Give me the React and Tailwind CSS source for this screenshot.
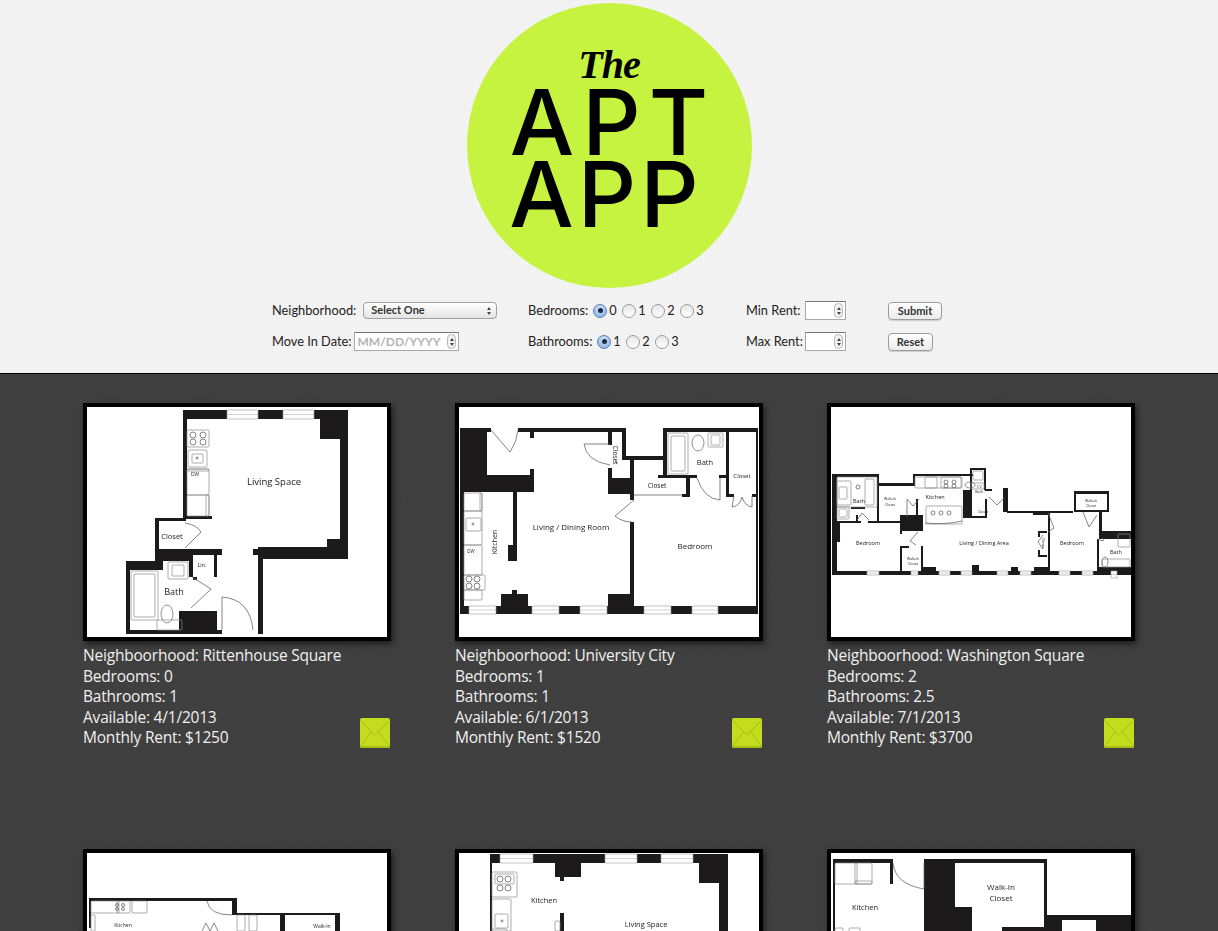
import React from 'react';

// floor plans, in image coordinates (300x230)
const PLANS = [
    {
        walls: [
            [96, 3, 165, 9], [233, 3, 28, 29], [253, 3, 8, 149], [240, 132, 21, 20], [171, 140, 90, 12],
            [166, 142, 6, 6], [171, 140, 5, 87], [96, 3, 4, 109], [99, 109, 26, 3], [68, 111, 31, 3],
            [68, 111, 4, 45], [69, 142, 66, 6], [69, 148, 33, 6], [39, 154, 37, 9], [39, 154, 4, 73], [39, 223, 96, 4],
            [92, 204, 38, 20], [102, 146, 4, 24], [127, 148, 3, 22], [106, 170, 4, 3],
        ],
        windows: [[140, 3, 31, 9], [196, 3, 31, 9]],
        lines: [
            'M98 116 Q110 118 114 125 L98 141', 'M104 201 L124 182 L105 170', 'M135 223 L135 190 Q163 192 166 223',
        ],
        boxes: [
            [100, 23, 22, 17], [101, 43, 19, 17], [105, 47, 11, 9], [100, 62, 22, 26], [100, 62, 22, 2], [100, 88, 22, 21],
            [119, 88, 3, 21], [44, 164, 27, 49], [47, 167, 21, 43], [81, 155, 20, 17], [85, 158, 12, 11], [70, 213, 25, 10],
        ],
        circles: [[106, 28, 3], [116, 28, 3], [106, 35, 3], [116, 35, 3], [110, 51, 1]],
        ovals: [[80, 207, 6, 9]],
        labels: [
            ['Living Space', 187, 75, 9.5], ['Closet', 85, 130, 7.5], ['Bath', 87, 186, 9], ['Lin.', 115, 159, 5.5], ['DW', 108, 68, 5],
        ],
    },
    {
        walls: [
            [1, 21, 31, 4], [59, 21, 107, 4], [1, 21, 27, 64], [1, 68, 74, 17], [71, 62, 4, 23], [71, 25, 4, 6],
            [54, 85, 4, 53], [49, 138, 9, 16], [1, 85, 4, 121], [1, 199, 298, 8], [42, 187, 27, 12], [53, 183, 5, 4],
            [149, 187, 26, 12], [171, 115, 4, 84], [149, 25, 4, 13], [149, 61, 4, 10], [149, 71, 26, 16],
            [163, 21, 4, 32], [163, 49, 45, 4], [171, 53, 4, 40], [204, 21, 4, 47], [204, 21, 95, 4], [297, 21, 2, 179],
            [267, 25, 3, 65], [199, 68, 39, 3], [227, 71, 4, 19], [223, 87, 8, 3], [260, 68, 10, 3], [267, 87, 8, 3], [293, 87, 6, 3],
        ],
        windows: [[10, 199, 27, 8], [73, 199, 27, 8], [121, 199, 27, 8], [185, 199, 27, 8], [233, 199, 26, 8]],
        lines: [
            'M32 23 L51 45 Q58 35 59 23', 'M125 37 L151 37 M125 37 Q127 54 151 58', 'M238 71 Q245 92 261 93 L261 71',
            'M175 93 L156 109 Q163 115 173 115', 'M275 89 L273 100 Q281 99 283 90 Q286 99 293 100 L293 89', 'M175 88 L223 88',
        ],
        boxes: [
            [5, 86, 18, 18], [21, 86, 2, 18], [5, 104, 18, 34], [7, 111, 15, 13], [5, 138, 18, 30], [5, 168, 21, 15], [5, 183, 18, 10],
            [209, 26, 20, 41], [212, 29, 14, 35], [249, 26, 15, 14], [252, 28, 9, 10],
        ],
        circles: [[10, 172, 3], [18, 172, 3], [10, 179, 3], [18, 179, 3], [14, 117, 1]],
        ovals: [[239, 36, 6, 8]],
        labels: [
            ['Living / Dining Room', 112, 121, 8], ['Bedroom', 236, 140, 8], ['Bath', 246, 56, 7.5], ['Closet', 198, 79, 6.5],
            ['Closet', 283, 69, 6], ['Closet', 156, 48, 6.5, 90], ['Kitchen', 36, 135, 7, -90], ['DW', 12, 145, 4.5],
        ],
    },
    {
        walls: [
            [1, 164, 299, 4], [1, 67, 5, 101], [1, 67, 47, 3], [46, 67, 2, 47], [48, 76, 36, 3], [82, 67, 2, 12], [82, 67, 60, 2],
            [132, 83, 9, 28], [141, 61, 14, 2], [139, 61, 2, 24], [153, 61, 2, 22], [154, 82, 7, 2], [172, 81, 5, 24], [176, 104, 66, 2],
            [202, 104, 15, 4], [243, 84, 35, 3], [243, 84, 2, 21], [276, 84, 2, 21], [243, 103, 35, 2], [268, 105, 3, 26], [268, 124, 32, 8],
            [217, 106, 2, 58], [69, 108, 23, 16], [85, 92, 2, 16], [6, 114, 24, 2], [37, 114, 32, 2], [1, 115, 8, 20], [1, 150, 4, 14],
            [69, 124, 2, 3], [69, 139, 2, 25], [90, 139, 2, 25], [70, 139, 8, 2], [92, 160, 13, 4], [141, 158, 7, 6], [180, 160, 7, 4],
            [203, 160, 14, 4], [46, 100, 2, 14], [132, 109, 24, 2], [154, 92, 2, 19], [209, 124, 7, 2], [209, 148, 7, 2], [207, 124, 2, 6],
            [207, 143, 2, 7], [266, 132, 2, 32], [266, 160, 34, 4], [2, 88, 4, 8], [2, 104, 4, 8], [25, 108, 2, 6], [20, 100, 14, 2],
        ],
        windows: [[36, 164, 12, 4], [80, 164, 7, 4], [108, 164, 11, 4], [130, 164, 11, 4], [166, 164, 11, 4], [189, 164, 11, 4], [228, 164, 11, 4], [251, 164, 11, 4], [280, 164, 6, 7]],
        lines: [
            'M76 110 L76 92 L82 99 L88 92', 'M87 125 L79 134 L85 138', 'M158 90 L166 98 L173 91', 'M217 106 L223 121 L217 125',
            'M252 105 L258 120 L266 108', 'M26 113 L31 106 L38 113', 'M94 116 Q115 118 131 114', 'M212 128 L207 135 L212 142', 'M266 132 Q276 136 271 131',
        ],
        boxes: [
            [6, 70, 40, 30], [6, 74, 14, 24], [8, 80, 8, 12], [34, 72, 9, 26], [6, 100, 12, 12], [8, 102, 8, 8], [84, 70, 47, 11], [94, 70, 12, 11], [110, 70, 20, 11],
            [95, 99, 36, 18], [142, 64, 10, 9], [287, 127, 12, 13], [271, 152, 28, 8], [140, 76, 13, 6],
        ],
        circles: [[27, 80, 2], [115, 75, 2], [123, 75, 2], [115, 79, 2], [123, 79, 2], [102, 106, 2], [110, 106, 2], [118, 106, 2]],
        ovals: [[139, 78, 5, 3], [274, 155, 3, 5]],
        labels: [
            ['Bath', 28, 95, 5.5], ['Walk-In', 59, 92, 3.5], ['Closet', 59, 98, 3.5], ['Kitchen', 104, 91, 5.5], ['1/2', 148, 80, 3.5], ['Bath', 148, 85, 3.5],
            ['Closet', 152, 105, 3.5], ['Bedroom', 37, 137, 5.5], ['Living / Dining Area', 153, 137, 5.5], ['Closet', 212, 136, 3.5, 90], ['Bedroom', 241, 137, 5.5],
            ['Walk-In', 260, 94, 3.5], ['Closet', 260, 99, 3.5], ['Bath', 285, 146, 5.5], ['Walk-In', 82, 152, 3.5], ['Closet', 82, 157, 3.5],
        ],
    },
    {
        walls: [[2, 45, 143, 3], [2, 45, 2, 30], [145, 45, 5, 17], [150, 60, 103, 2], [193, 60, 5, 20], [248, 60, 5, 20]],
        windows: [],
        lines: ['M120 48 Q122 62 145 62', 'M115 78 L119 70 L123 78 L127 70 L131 78'],
        boxes: [[4, 48, 28, 12], [30, 48, 13, 12], [45, 48, 15, 12], [4, 62, 4, 16], [150, 62, 8, 16], [162, 62, 8, 16]],
        circles: [[30, 52, 1.5], [36, 52, 1.5], [30, 56, 1.5], [36, 56, 1.5]],
        ovals: [],
        labels: [['Kitchen', 36, 73, 5], ['Walk-In', 235, 74, 5]],
    },
    {
        walls: [[31, 1, 238, 9], [240, 1, 29, 29], [260, 1, 9, 80], [96, 1, 26, 23], [101, 24, 4, 4], [101, 60, 4, 18], [31, 1, 2, 80]],
        windows: [[41, 1, 33, 9], [146, 1, 32, 9], [202, 1, 32, 9]],
        lines: [],
        boxes: [[33, 19, 25, 25], [36, 21, 19, 10], [33, 46, 19, 32], [36, 61, 13, 14], [96, 68, 5, 10], [33, 76, 15, 4]],
        circles: [[41, 26, 3], [49, 26, 3], [41, 35, 3], [49, 35, 3], [43, 68, 1]],
        ovals: [],
        labels: [['Kitchen', 85, 48, 7.5], ['Living Space', 187, 72, 7.5]],
    },
    {
        walls: [
            [2, 6, 59, 4], [59, 6, 3, 25], [93, 6, 120, 4], [93, 6, 31, 74], [124, 54, 17, 26], [171, 74, 46, 6], [213, 6, 3, 56],
            [213, 62, 87, 18], [2, 6, 2, 74],
        ],
        windows: [],
        lines: ['M62 10 Q64 31 93 36 L93 10'],
        boxes: [[4, 10, 22, 21], [24, 10, 17, 21], [24, 28, 17, 3], [4, 75, 8, 5], [18, 75, 11, 5]],
        circles: [],
        ovals: [],
        labels: [['Kitchen', 34, 55, 7.5], ['Walk-In', 170, 35, 8], ['Closet', 170, 46, 8]],
        rooms: [[231, 67, 34, 13]],
    },
];

const LISTINGS = [
    { neighborhood: 'Rittenhouse Square', bedrooms: '0', bathrooms: '1', available: '4/1/2013', rent: '$1250' },
    { neighborhood: 'University City', bedrooms: '1', bathrooms: '1', available: '6/1/2013', rent: '$1520' },
    { neighborhood: 'Washington Square', bedrooms: '2', bathrooms: '2.5', available: '7/1/2013', rent: '$3700' },
];

function FloorPlan({ plan }) {
    return (
        <svg viewBox="0 0 300 230" className="block w-[300px] h-[230px] bg-white blur-[0.35px]">
            {plan.walls.map(([x, y, w, h], i) => (
                <rect key={i} x={x} y={y} width={w} height={h} fill="#1c1a1b" />
            ))}
            {(plan.rooms || []).map(([x, y, w, h], i) => (
                <rect key={i} x={x} y={y} width={w} height={h} fill="#fff" />
            ))}
            {plan.windows.map(([x, y, w, h], i) => (
                <g key={i}>
                    <rect x={x} y={y} width={w} height={h} fill="#fff" stroke="#999" strokeWidth="0.6" />
                    <path d={`M${x} ${y + h / 2} H${x + w}`} stroke="#aaa" strokeWidth="0.5" />
                </g>
            ))}
            {plan.boxes.map(([x, y, w, h], i) => (
                <rect key={i} x={x} y={y} width={w} height={h} rx="1" fill="none" stroke="#8a8a8a" strokeWidth="0.7" />
            ))}
            {plan.circles.map(([cx, cy, r], i) => (
                <circle key={i} cx={cx} cy={cy} r={r} fill="none" stroke="#666" strokeWidth="0.8" />
            ))}
            {plan.ovals.map(([cx, cy, rx, ry], i) => (
                <ellipse key={i} cx={cx} cy={cy} rx={rx} ry={ry} fill="none" stroke="#777" strokeWidth="0.8" />
            ))}
            {plan.lines.map((d, i) => (
                <path key={i} d={d} fill="none" stroke="#666" strokeWidth="0.8" />
            ))}
            {plan.labels.map(([text, x, y, size, rotate], i) => (
                <text
                    key={i}
                    x={x}
                    y={y}
                    fontSize={size}
                    fill="#222"
                    textAnchor="middle"
                    dominantBaseline="middle"
                    fontFamily="'Open Sans', sans-serif"
                    transform={rotate ? `rotate(${rotate} ${x} ${y})` : undefined}
                >
                    {text}
                </text>
            ))}
        </svg>
    );
}

function MailIcon() {
    return (
        <svg viewBox="0 0 30 30" className="w-[30px] h-[30px] shrink-0 mr-px">
            <rect width="30" height="30" rx="2" fill="#c4dc1e" />
            <path d="M1 3 L15 17 L29 3" fill="none" stroke="#a5bb14" strokeWidth="1" />
            <path d="M1 28 L11 14 M29 28 L19 14" fill="none" stroke="#a9bf16" strokeWidth="1" />
            <path d="M0 28 H30 V28 Q30 30 28 30 H2 Q0 30 0 28 Z" fill="#a9bf16" />
        </svg>
    );
}

function Card({ plan, listing }) {
    return (
        <div className="w-[308px] h-[446px]">
            <div className="border-4 border-black shadow-[2px_3px_6px_rgba(0,0,0,0.55)]">
                <FloorPlan plan={plan} />
            </div>
            {listing && (
                <div className="mt-[4px] flex items-end justify-between text-[15.5px] tracking-[-0.2px] leading-[20.5px] text-[#f0f0f0] font-['Open_Sans',sans-serif]">
                    <div>
                        <div>Neighboorhood: {listing.neighborhood}</div>
                        <div>Bedrooms: {listing.bedrooms}</div>
                        <div>Bathrooms: {listing.bathrooms}</div>
                        <div>Available: {listing.available}</div>
                        <div>Monthly Rent: {listing.rent}</div>
                    </div>
                    <MailIcon />
                </div>
            )}
        </div>
    );
}

function Radio({ checked, label }) {
    return (
        <span className="flex items-center gap-[2px]">
            {checked ? (
                <span className="w-[14px] h-[14px] rounded-full border border-[#5a7fb5] bg-[radial-gradient(circle_at_50%_30%,#d4e4f8,#7ea9e0)] flex items-center justify-center">
                    <span className="w-[5px] h-[5px] rounded-full bg-[#1d2a45]" />
                </span>
            ) : (
                <span className="w-[14px] h-[14px] rounded-full border border-[#9a9a9a] bg-[linear-gradient(#e6e6e6,#ffffff)]" />
            )}
            <span className="w-[13px]">{label}</span>
        </span>
    );
}

function Spinner() {
    return (
        <span className="w-[9px] h-[15px] rounded-full border border-[#b5b5b5] bg-[#f4f4f4] flex flex-col items-center justify-center gap-[2px] shrink-0">
            <span className="border-x-[2px] border-x-transparent border-b-[3px] border-b-[#444]" />
            <span className="border-x-[2px] border-x-transparent border-t-[3px] border-t-[#444]" />
        </span>
    );
}

function NumberInput({ className }) {
    return (
        <span className={`h-[19px] bg-white border border-[#a9a9a9] border-t-[#777] flex items-center justify-end pr-[2px] ${className}`}>
            <Spinner />
        </span>
    );
}

function AquaButton({ children, className }) {
    return (
        <button className={`h-[18px] rounded-[4px] border border-[#9c9c9c] bg-[linear-gradient(#ffffff,#ebebeb)] shadow-[0_1px_1px_rgba(0,0,0,0.15)] text-[11px] font-bold text-[#333] leading-none ${className}`}>
            {children}
        </button>
    );
}

function SearchForm() {
    return (
        <div className="ml-[272px] mt-[7px] self-start grid grid-cols-[256px_218px_142px_54px] auto-rows-[31px] items-center text-[12.8px] text-[#222] whitespace-nowrap font-['Lato',sans-serif]">
            <div className="flex items-center gap-[7px]">
                <span>Neighborhood:</span>
                <span className="w-[134px] h-[17px] rounded-[4px] border border-[#a0a0a0] bg-[linear-gradient(#ffffff,#e4e4e4)] flex items-center justify-between pl-[7px] pr-[5px] text-[11px] font-bold text-[#333]">
                    <span>Select One</span>
                    <span className="flex flex-col gap-[2px]">
                        <span className="border-x-[2px] border-x-transparent border-b-[3px] border-b-[#444]" />
                        <span className="border-x-[2px] border-x-transparent border-t-[3px] border-t-[#444]" />
                    </span>
                </span>
            </div>
            <div className="flex items-center">
                <span className="mr-[5px]">Bedrooms:</span>
                <Radio checked label="0" />
                <Radio label="1" />
                <Radio label="2" />
                <Radio label="3" />
            </div>
            <div className="flex items-center gap-[5px]">
                <span className="w-[54px]">Min Rent:</span>
                <NumberInput className="w-[41px]" />
            </div>
            <AquaButton className="w-[54px]">Submit</AquaButton>

            <div className="flex items-center gap-[3px]">
                <span>Move In Date:</span>
                <span className="w-[105px] h-[19px] bg-white border border-[#a9a9a9] border-t-[#777] flex items-center justify-between pl-[2px] pr-[2px] text-[12px] font-bold text-[#b4b4b4]">
                    <span>MM/DD/YYYY</span>
                    <Spinner />
                </span>
            </div>
            <div className="flex items-center">
                <span className="mr-[5px]">Bathrooms:</span>
                <Radio checked label="1" />
                <Radio label="2" />
                <Radio label="3" />
            </div>
            <div className="flex items-center gap-[3px]">
                <span className="w-[56px]">Max Rent:</span>
                <NumberInput className="w-[41px]" />
            </div>
            <AquaButton className="w-[45px]">Reset</AquaButton>
        </div>
    );
}

function Logo() {
    return (
        <div className="w-[285px] h-[285px] rounded-full bg-[#c5f33f] flex flex-col items-center text-black shrink-0">
            <div className="mt-[42px] h-[40px] text-[40px] leading-[40px] italic font-bold font-['Liberation_Serif',serif] tracking-[-1px]">The</div>
            <div className="mt-[1px] h-[72px] text-[91px] leading-[72px] font-medium font-['Inter',sans-serif] tracking-[8px] mr-[-8px]">APT</div>
            <div className="h-[72px] text-[91px] leading-[72px] font-medium font-['Inter',sans-serif] tracking-[4px] mr-[6px]">APP</div>
        </div>
    );
}

export default function App() {
    return (
        <div className="h-screen overflow-hidden font-['Lato',sans-serif]">
            <header className="h-[374px] box-border border-b border-black pt-[3px] flex flex-col items-center bg-[#f4f4f4] bg-[repeating-linear-gradient(0deg,rgba(0,0,0,0.012)_0px,rgba(0,0,0,0.012)_1px,transparent_1px,transparent_3px),repeating-linear-gradient(90deg,rgba(0,0,0,0.012)_0px,rgba(0,0,0,0.012)_1px,transparent_1px,transparent_4px)]">
                <Logo />
                <SearchForm />
            </header>
            <main className="bg-[#3f3f3f] bg-[repeating-linear-gradient(45deg,rgba(255,255,255,0.006)_0px,rgba(255,255,255,0.006)_2px,transparent_2px,transparent_5px)] pl-[83px] pt-[29px] grid grid-cols-[308px_308px_308px] gap-x-[64px] min-h-[600px]">
                {PLANS.map((plan, i) => (
                    <Card key={i} plan={plan} listing={LISTINGS[i]} />
                ))}
            </main>
        </div>
    );
}
